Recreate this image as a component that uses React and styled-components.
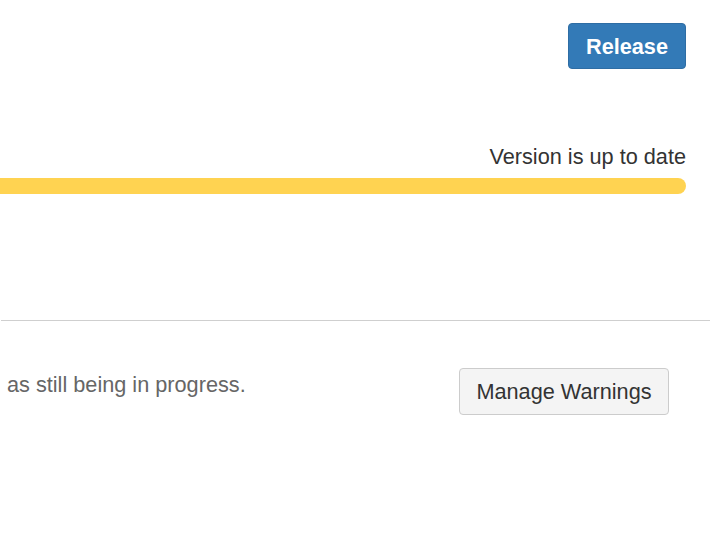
import React from "react";
import styled, { createGlobalStyle } from "styled-components";

const Global = createGlobalStyle`
  html, body { margin: 0; padding: 0; background: #fff; }
  body { font-family: "Liberation Sans", Arial, sans-serif; }
  * { box-sizing: border-box; }
`;

const Page = styled.div`
  width: 710px;
  height: 547px;
  overflow: hidden;
  display: flex;
  flex-direction: column;
`;

const Header = styled.section`
  display: flex;
  flex-direction: column;
  align-items: flex-end;
  padding: 23px 24px 0 0;
`;

const Button = styled.button`
  font-family: "Liberation Sans", Arial, sans-serif;
  font-size: 21.7px;
  border-radius: 4px;
  cursor: pointer;
  height: 47px;
  padding: 0 16px;
  border: 1px solid ${(p) => (p.$primary ? "#2e6da4" : "#ccc")};
  background: ${(p) => (p.$primary ? "#337ab7" : "#f4f4f4")};
  color: ${(p) => (p.$primary ? "#fff" : "#333")};
  font-weight: ${(p) => (p.$primary ? 700 : 400)};
`;

const ReleaseButton = styled(Button)`
  width: 118px;
  height: 46px;
  padding: 2px 0 0 0;
`;

const StatusLabel = styled.div`
  margin-top: 73px;
  font-size: 21.7px;
  line-height: 29px;
  color: #333;
`;

const Progress = styled.div`
  align-self: stretch;
  margin-top: 7px;
  height: 16px;
  background: #ffd351;
  border-radius: 0 8px 8px 0;
`;

const Divider = styled.hr`
  margin: 126px 0 0 1px;
  border: 0;
  border-top: 1px solid #cfcfcf;
  height: 0;
`;

const WarningRow = styled.div`
  display: flex;
  align-items: flex-start;
  justify-content: space-between;
  padding: 47px 41px 0 7px;
`;

const Note = styled.p`
  margin: 2px 0 0 0;
  font-size: 21.7px;
  line-height: 29px;
  color: #666;
`;

const ManageButton = styled(Button)`
  width: 210px;
  padding: 0;
`;

export default function App() {
  return (
    <Page>
      <Global />
      <Header>
        <ReleaseButton $primary>Release</ReleaseButton>
        <StatusLabel>Version is up to date</StatusLabel>
        <Progress />
      </Header>
      <Divider />
      <WarningRow>
        <Note>as still being in progress.</Note>
        <ManageButton>Manage Warnings</ManageButton>
      </WarningRow>
    </Page>
  );
}
